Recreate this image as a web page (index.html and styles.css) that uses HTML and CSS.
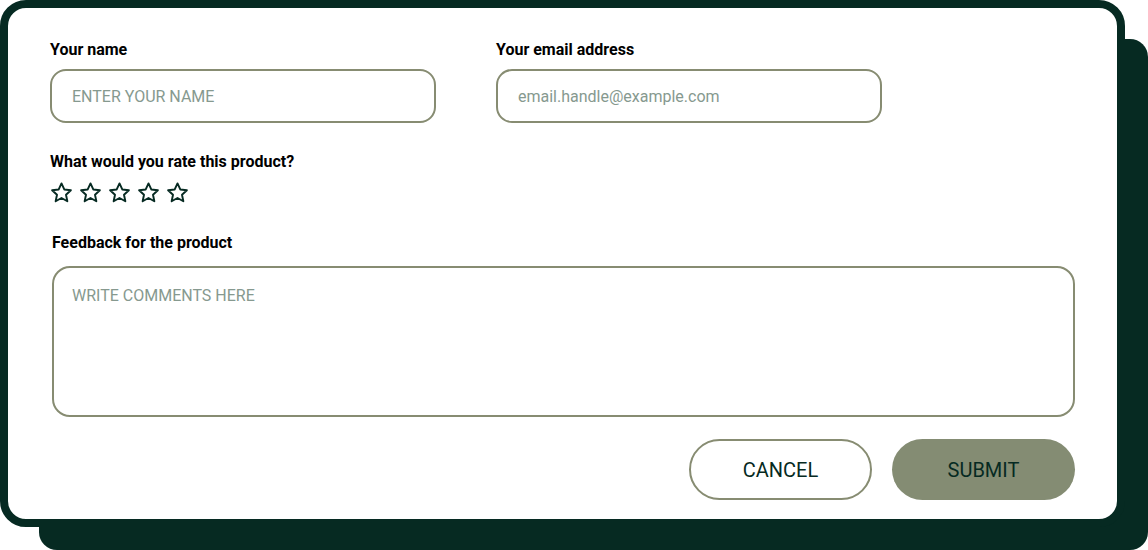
FILE: index.html
```html
<!DOCTYPE html>
<html lang="en">
<head>
<meta charset="utf-8">
<title>Feedback</title>
<link rel="stylesheet" href="styles.css">
</head>
<body>
<form class="card">
  <div class="row">
    <label class="field">
      <span class="label">Your name</span>
      <input class="input" type="text" placeholder="ENTER YOUR NAME">
    </label>
    <label class="field">
      <span class="label">Your email address</span>
      <input class="input" type="email" placeholder="email.handle@example.com">
    </label>
  </div>
  <div class="rating">
    <span class="label">What would you rate this product?</span>
    <div class="stars">
      <svg class="star" viewBox="0 0 24 24"><path d="M12 2.5l2.9 6.3 6.9.8-5.1 4.7 1.4 6.8L12 17.7l-6.1 3.4 1.4-6.8-5.1-4.7 6.9-.8z"/></svg>
      <svg class="star" viewBox="0 0 24 24"><path d="M12 2.5l2.9 6.3 6.9.8-5.1 4.7 1.4 6.8L12 17.7l-6.1 3.4 1.4-6.8-5.1-4.7 6.9-.8z"/></svg>
      <svg class="star" viewBox="0 0 24 24"><path d="M12 2.5l2.9 6.3 6.9.8-5.1 4.7 1.4 6.8L12 17.7l-6.1 3.4 1.4-6.8-5.1-4.7 6.9-.8z"/></svg>
      <svg class="star" viewBox="0 0 24 24"><path d="M12 2.5l2.9 6.3 6.9.8-5.1 4.7 1.4 6.8L12 17.7l-6.1 3.4 1.4-6.8-5.1-4.7 6.9-.8z"/></svg>
      <svg class="star" viewBox="0 0 24 24"><path d="M12 2.5l2.9 6.3 6.9.8-5.1 4.7 1.4 6.8L12 17.7l-6.1 3.4 1.4-6.8-5.1-4.7 6.9-.8z"/></svg>
    </div>
  </div>
  <label class="feedback">
    <span class="label">Feedback for the product</span>
    <textarea class="textarea" placeholder="WRITE COMMENTS HERE"></textarea>
  </label>
  <div class="actions">
    <button type="button" class="btn btn-cancel">CANCEL</button>
    <button type="button" class="btn btn-submit">SUBMIT</button>
  </div>
</form>
</body>
</html>
```

FILE: styles.css
```css
* { box-sizing: border-box; }
html, body { margin: 0; padding: 0; background: #ffffff; }
body {
  width: 1148px;
  height: 550px;
  overflow: hidden;
  font-family: Roboto, "Liberation Sans", Arial, sans-serif;
}
.card {
  width: 1125px;
  height: 527px;
  background: #ffffff;
  border: 8px solid #062a22;
  border-radius: 26px;
  box-shadow: 31px 31px 0 -8px #062a22;
  padding: 32px 42px 0 42px;
  display: flex;
  flex-direction: column;
}
.label {
  display: block;
  font-size: 16px;
  line-height: 19px;
  font-weight: 700;
  color: #000000;
}
.row {
  display: flex;
  gap: 60px;
}
.field {
  display: flex;
  flex-direction: column;
  gap: 10px;
  width: 386px;
}
.input, .textarea {
  font-family: Roboto, "Liberation Sans", Arial, sans-serif;
  font-size: 16px;
  color: #062a22;
  border: 2px solid #878c72;
  background: #ffffff;
  outline: none;
}
.input {
  height: 54px;
  border-radius: 16px;
  padding: 0 20px;
}
.input::placeholder, .textarea::placeholder { color: #86998f; opacity: 1; }
.rating {
  margin-top: 29px;
  display: flex;
  flex-direction: column;
  gap: 10px;
}
.stars {
  display: flex;
  gap: 6px;
  padding-left: 0;
}
.star {
  width: 23px;
  height: 23px;
  fill: none;
  stroke: #062a22;
  stroke-width: 2;
  stroke-linejoin: round;
}
.feedback {
  margin-top: 29px;
  margin-left: 2px;
  display: flex;
  flex-direction: column;
  gap: 14px;
}
.textarea {
  height: 151px;
  border-radius: 18px;
  padding: 18px 18px;
  resize: none;
}
.actions {
  margin-top: 22px;
  display: flex;
  justify-content: flex-end;
  gap: 20px;
}
.btn {
  width: 183px;
  height: 61px;
  border-radius: 31px;
  font-family: Roboto, "Liberation Sans", Arial, sans-serif;
  font-size: 20px;
  color: #062a22;
  cursor: pointer;
}
.btn-cancel {
  background: #ffffff;
  border: 2px solid #878c72;
}
.btn-submit {
  background: #848c73;
  border: none;
}
```
